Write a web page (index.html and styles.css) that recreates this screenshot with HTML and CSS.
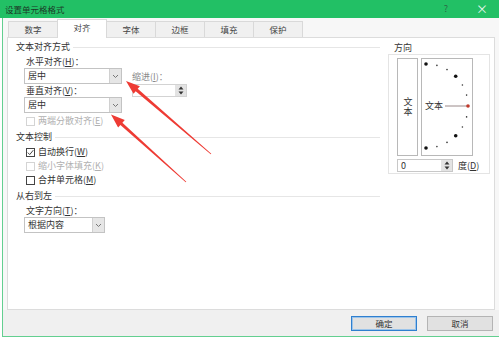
FILE: index.html
```html
<!DOCTYPE html>
<html lang="zh-CN">
<head>
  <meta charset="UTF-8" />
  <title>设置单元格格式</title>
  <link rel="stylesheet" href="styles.css">
</head>
<body>

  <div class="titlebar">
    <span class="title">设置单元格格式</span>
    <span class="help">?</span>
    <span class="close">×</span>
  </div>

  <div class="window">
    <div class="tabs">
      <div class="tab">数字</div>
      <div class="tab active">对齐</div>
      <div class="tab">字体</div>
      <div class="tab">边框</div>
      <div class="tab">填充</div>
      <div class="tab">保护</div>
    </div>

    <div class="panel">
      <div class="left">
        <div class="group-head">文本对齐方式</div>
        <div class="align-row">
          <div class="align-col">
            <div class="label">水平对齐(<u>H</u>)：</div>
            <div class="select wide">
              <span>居中</span>
              <span class="drop"><svg width="7" height="5" viewBox="0 0 7 5"><polyline points="1,1 3.5,3.5 6,1" fill="none" stroke="#777" stroke-width="1"/></svg></span>
            </div>
            <div class="label gap-top">垂直对齐(<u>V</u>)：</div>
            <div class="select wide">
              <span>居中</span>
              <span class="drop"><svg width="7" height="5" viewBox="0 0 7 5"><polyline points="1,1 3.5,3.5 6,1" fill="none" stroke="#777" stroke-width="1"/></svg></span>
            </div>
          </div>
          <div class="indent-col">
            <div class="label muted">缩进(<u>I</u>)：</div>
            <div class="spin">
              <span class="spin-btn">
                <svg width="6" height="9" viewBox="0 0 6 9"><polygon points="3,0.5 5.5,3.5 0.5,3.5" fill="#333"/><polygon points="0.5,5.5 5.5,5.5 3,8.5" fill="#333"/></svg>
              </span>
            </div>
          </div>
        </div>
        <div class="check disabled first-check"><span class="box"></span>两端分散对齐(<u>E</u>)</div>

        <div class="group-head section">文本控制</div>
        <div class="check tight"><span class="box"><svg width="7" height="7" viewBox="0 0 7 7"><polyline points="0.8,3.6 2.7,5.6 6.3,1.2" fill="none" stroke="#444" stroke-width="1"/></svg></span>自动换行(<u>W</u>)</div>
        <div class="check disabled"><span class="box"></span>缩小字体填充(<u>K</u>)</div>
        <div class="check"><span class="box"></span>合并单元格(<u>M</u>)</div>

        <div class="group-head section">从右到左</div>
        <div class="label indent tight">文字方向(<u>T</u>)：</div>
        <div class="select narrow">
          <span>根据内容</span>
          <span class="drop"><svg width="7" height="5" viewBox="0 0 7 5"><polyline points="1,1 3.5,3.5 6,1" fill="none" stroke="#777" stroke-width="1"/></svg></span>
        </div>
      </div>

      <div class="right">
        <div class="orient-title">方向</div>
        <div class="orient">
          <div class="orient-top">
            <div class="vbox"><span class="vtext">文本</span></div>
            <div class="arcbox">
              <span class="htext">文本</span>
              <svg class="dial" width="50" height="96" viewBox="0 0 50 96">
                <line x1="23" y1="47" x2="45" y2="47" stroke="#9a8a8a" stroke-width="1"/>
                <circle cx="4" cy="5" r="1.8" fill="#111"/>
                <circle cx="14.9" cy="6.4" r="0.8" fill="#333"/>
                <circle cx="25" cy="10.6" r="0.8" fill="#333"/>
                <circle cx="33.7" cy="17.3" r="1.8" fill="#111"/>
                <circle cx="40.4" cy="26" r="0.8" fill="#333"/>
                <circle cx="44.6" cy="36.1" r="0.8" fill="#333"/>
                <circle cx="46" cy="47" r="1.8" fill="#c0392b"/>
                <circle cx="44.6" cy="57.9" r="0.8" fill="#333"/>
                <circle cx="40.4" cy="68" r="0.8" fill="#333"/>
                <circle cx="33.7" cy="76.7" r="1.8" fill="#111"/>
                <circle cx="25" cy="83.4" r="0.8" fill="#333"/>
                <circle cx="14.9" cy="87.6" r="0.8" fill="#333"/>
                <circle cx="4" cy="89" r="1.8" fill="#111"/>
              </svg>
            </div>
          </div>
          <div class="degree-row">
            <div class="spin deg">
              <span class="val">0</span>
              <span class="spin-btn">
                <svg width="6" height="9" viewBox="0 0 6 9"><polygon points="3,0.5 5.5,3.5 0.5,3.5" fill="#333"/><polygon points="0.5,5.5 5.5,5.5 3,8.5" fill="#333"/></svg>
              </span>
            </div>
            <span class="deg-label">度(<u>D</u>)</span>
          </div>
        </div>
      </div>
    </div>

    <div class="footer">
      <button class="btn primary">确定</button>
      <button class="btn">取消</button>
    </div>
  </div>

  <svg class="arrows" width="499" height="339" viewBox="0 0 499 339">
    <polygon points="126,81 139.9,86.2 137.7,88.8 211.3,153.7 210.7,154.3 135.7,91.2 133.5,93.8" fill="#ee3b34"/>
    <polygon points="111,114.5 124.8,120.1 122.4,122.7 186.3,181.7 185.7,182.3 120.4,124.9 118.1,127.5" fill="#ee3b34"/>
  </svg>

</body>
</html>
```

FILE: styles.css
```css
* {
  box-sizing: border-box;
}
body {
  position: relative;
  margin: 0;
  width: 499px;
  height: 339px;
  overflow: hidden;
  background: #fff;
  font-family: "Noto Sans CJK SC", "Noto Sans", sans-serif;
  font-size: 9px;
  color: #333;
}
u {
  text-decoration: underline;
}

/* title bar */
.titlebar {
  height: 18px;
  background: #22c065;
  display: flex;
  align-items: center;
  padding-left: 5px;
  line-height: 12px;
}
.title {
  color: #1c3a28;
  font-size: 8.5px;
  flex: 1;
}
.help {
  color: #2b6b45;
  font-size: 9px;
  margin-right: 28px;
}
.close {
  color: #e6f6ec;
  font-size: 12px;
  margin-right: 11px;
}

/* window body */
.window {
  margin-left: 2px;
  height: 319px;
  border-left: 1px solid #63cf90;
  border-bottom: 1px solid #63cf90;
  background: #f7f7f7;
}
.tabs {
  display: flex;
  padding: 3px 0 0 5px;
  height: 19px;
  position: relative;
  z-index: 1;
}
.tab {
  width: 50px;
  height: 16px;
  margin-right: -1px;
  border: 1px solid #d9d9d9;
  border-bottom: none;
  background: #f0f0f0;
  text-align: center;
  line-height: 14px;
  font-size: 8.5px;
  color: #444;
}
.tab.active {
  background: #fff;
  height: 19px;
  margin-top: -2px;
  position: relative;
}

.panel {
  margin-left: 4px;
  width: 488px;
  height: 273px;
  border: 1px solid #dcdcdc;
  background: #fff;
  display: flex;
}

/* left column */
.left {
  width: 372px;
  padding: 3px 0 0 8px;
}
.group-head {
  display: flex;
  align-items: center;
  height: 12px;
  line-height: 12px;
}
.group-head::after {
  content: "";
  flex: 1;
  margin-left: 3px;
  border-top: 1px solid #e6e6e6;
}
.group-head.section {
  margin-top: 4px;
}
.align-row {
  display: flex;
  margin-top: 3px;
}
.align-col {
  margin-left: 8px;
  width: 98px;
}
.label {
  height: 12px;
  line-height: 12px;
  padding-left: 2px;
}
.label.gap-top {
  margin-top: 1px;
}
.label.muted {
  color: #8a8a8a;
}
.label.indent {
  margin-left: 8px;
}
.label.tight {
  margin-top: 3px;
}
.select {
  height: 16px;
  border: 1px solid #c3c3c3;
  background: #fff;
  display: flex;
  align-items: center;
  justify-content: space-between;
  padding-left: 3px;
  line-height: 12px;
}
.select.wide {
  width: 98px;
}
.select.narrow {
  width: 81px;
  margin-left: 8px;
}
.drop {
  width: 12px;
  height: 14px;
  background: #e6e6e6;
  border-left: 1px solid #d0d0d0;
  display: flex;
  align-items: center;
  justify-content: center;
}
.indent-col {
  margin-left: 10px;
  padding-top: 15px;
}
.indent-col .label {
  padding-left: 0;
}
.spin {
  width: 55px;
  height: 13px;
  margin-top: 1px;
  border: 1px solid #d3d3d3;
  background: #fff;
  display: flex;
  align-items: center;
}
.spin-btn {
  width: 11px;
  height: 11px;
  margin-left: auto;
  background: #e3e3e3;
  display: flex;
  align-items: center;
  justify-content: center;
}
.check {
  display: flex;
  align-items: center;
  height: 12px;
  line-height: 12px;
  margin-top: 2px;
  margin-left: 10px;
}
.check.first-check {
  margin-top: 2px;
}
.check.tight {
  margin-top: 3px;
}
.box {
  width: 9px;
  height: 9px;
  border: 1px solid #444;
  background: #fff;
  margin-right: 3px;
  display: flex;
  align-items: center;
  justify-content: center;
}
.check.disabled {
  color: #b0b0b0;
}
.check.disabled .box {
  border-color: #d4d4d4;
}

/* orientation */
.right {
  margin-left: 8px;
  width: 102px;
  padding-top: 4px;
}
.orient-title {
  height: 12px;
  line-height: 12px;
  padding-left: 6px;
}
.orient {
  height: 120px;
  border: 1px solid #e4e4e4;
  padding: 3px 0 0 8px;
}
.orient-top {
  display: flex;
  gap: 3px;
  height: 98px;
}
.vbox {
  width: 21px;
  border: 1px solid #b8b8b8;
  display: flex;
  align-items: center;
  justify-content: center;
}
.vtext {
  writing-mode: vertical-rl;
  line-height: 10px;
  letter-spacing: 1px;
}
.arcbox {
  position: relative;
  width: 52px;
  border: 1px solid #b8b8b8;
}
.dial {
  position: absolute;
  top: 0;
  left: 0;
}
.htext {
  position: absolute;
  left: 3px;
  top: 41px;
  line-height: 12px;
}
.degree-row {
  display: flex;
  align-items: center;
  margin-top: 3px;
}
.spin.deg {
  width: 56px;
  margin-top: 0;
  border-color: #c8c8c8;
}
.val {
  padding-left: 3px;
  line-height: 11px;
}
.deg-label {
  margin-left: 5px;
  line-height: 12px;
}

/* footer */
.footer {
  height: 26px;
  display: flex;
  align-items: center;
  justify-content: flex-end;
  gap: 10px;
  padding-right: 6px;
  background: #f0f0f0;
}
.btn {
  width: 66px;
  height: 15px;
  padding: 0;
  border: 1px solid #b4b4b4;
  background: #e1e1e1;
  font-family: "Noto Sans CJK SC", "Noto Sans", sans-serif;
  font-size: 8.5px;
  line-height: 12px;
  color: #333;
}
.btn.primary {
  border-color: #2f7fcf;
  box-shadow: inset 0 0 0 1px #9cc4ea;
}

.arrows {
  position: absolute;
  top: 0;
  left: 0;
  pointer-events: none;
}
```
